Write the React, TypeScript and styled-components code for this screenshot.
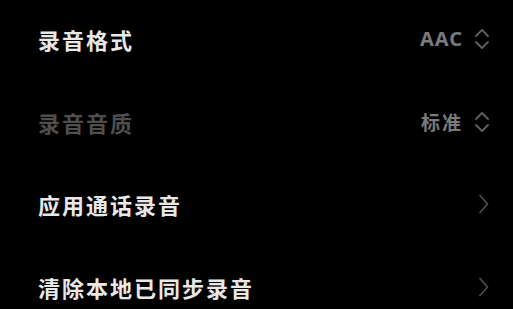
import styled, { createGlobalStyle } from "styled-components";

const GlobalStyle = createGlobalStyle`
  html, body {
    margin: 0;
    padding: 0;
    background: #000;
  }
  body {
    font-family: "Noto Sans CJK SC", "Noto Sans", sans-serif;
  }
`;

const List = styled.div`
  display: flex;
  flex-direction: column;
  width: 513px;
  height: 309px;
  overflow: hidden;
  background: #000;
`;

const Row = styled.div`
  display: flex;
  align-items: center;
  justify-content: space-between;
  flex: 0 0 82.5px;
  padding: 0 23px 4px 38px;
  box-sizing: border-box;
`;

const Title = styled.div<{ $disabled?: boolean }>`
  color: ${(p) => (p.$disabled ? "#4e4e4e" : "#e8e8e8")};
  font-size: 22px;
  font-weight: 700;
  letter-spacing: 2px;
  line-height: 1;
`;

const Trail = styled.div`
  display: flex;
  align-items: center;
  gap: 11px;
`;

const Value = styled.span`
  color: #7a7a7a;
  font-family: "Noto Sans", "Noto Sans CJK SC", sans-serif;
  font-size: 20px;
  font-weight: 700;
  letter-spacing: 1px;
  line-height: 1;
`;

const CnValue = styled(Value)`
  font-family: "Noto Sans CJK SC", sans-serif;
  font-size: 19px;
  letter-spacing: 2px;
`;

const Icon = styled.svg`
  display: block;
  flex: none;
`;

const UpDown = () => (
  <Icon width="16" height="22" viewBox="0 0 16 22" fill="none">
    <path
      d="M2 8 L8 2 L14 8 M2 14 L8 20 L14 14"
      stroke="#606060"
      strokeWidth="1.8"
      strokeLinecap="round"
      strokeLinejoin="round"
    />
  </Icon>
);

const Chevron = () => (
  <Icon width="12" height="20" viewBox="0 0 12 20" fill="none">
    <path
      d="M2 1.5 L9.5 10 L2 18.5"
      stroke="#4a4a4a"
      strokeWidth="1.8"
      strokeLinecap="round"
      strokeLinejoin="round"
    />
  </Icon>
);

export default function App() {
  return (
    <>
      <GlobalStyle />
      <List>
        <Row>
          <Title>录音格式</Title>
          <Trail>
            <Value>AAC</Value>
            <UpDown />
          </Trail>
        </Row>
        <Row>
          <Title $disabled>录音音质</Title>
          <Trail>
            <CnValue>标准</CnValue>
            <UpDown />
          </Trail>
        </Row>
        <Row>
          <Title>应用通话录音</Title>
          <Chevron />
        </Row>
        <Row>
          <Title>清除本地已同步录音</Title>
          <Chevron />
        </Row>
      </List>
    </>
  );
}
